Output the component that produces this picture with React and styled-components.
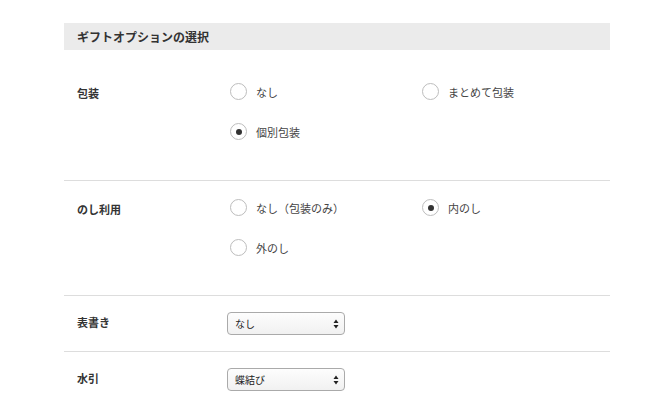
import styled, { createGlobalStyle } from "styled-components";

const GlobalStyle = createGlobalStyle`
  html, body {
    margin: 0;
    padding: 0;
    background: #fff;
  }
  body {
    font-family: "Noto Sans CJK JP", "Noto Sans", sans-serif;
    color: #333;
  }
`;

const giftRows = [
  {
    label: "包装",
    type: "radio",
    options: ["なし", "まとめて包装", "個別包装"],
    checked: "個別包装",
  },
  {
    label: "のし利用",
    type: "radio",
    options: ["なし（包装のみ）", "内のし", "外のし"],
    checked: "内のし",
  },
  { label: "表書き", type: "select", value: "なし" },
  { label: "水引", type: "select", value: "蝶結び" },
];

const App = () => {
  return (
    <>
      <GlobalStyle />
      <Container>
        <Header>ギフトオプションの選択</Header>
        {giftRows.map((row, i) => (
          <Row
            key={row.label}
            $compact={row.type === "select"}
            $first={i === 0}
            $last={i === giftRows.length - 1}
          >
            <Label>{row.label}</Label>
            {row.type === "radio" ? (
              <Options>
                {row.options.map((opt) => (
                  <Option key={opt}>
                    <Radio $checked={opt === row.checked} />
                    <span>{opt}</span>
                  </Option>
                ))}
              </Options>
            ) : (
              <SelectBox>
                <span>{row.value}</span>
                <Arrows viewBox="0 0 6 10" width="6" height="10">
                  <path d="M3 0.5 L5.5 4 H0.5 Z" fill="#222" />
                  <path d="M3 9.5 L5.5 6 H0.5 Z" fill="#222" />
                </Arrows>
              </SelectBox>
            )}
          </Row>
        ))}
      </Container>
    </>
  );
};

export default App;

const Container = styled.div`
  width: 546px;
  margin: 23px 0 0 64px;
`;

const Header = styled.div`
  height: 27px;
  background: #ebebeb;
  padding-left: 13px;
  display: flex;
  align-items: center;
  font-size: 12px;
  font-weight: 700;
  color: #333;
`;

const Row = styled.div`
  display: flex;
  align-items: flex-start;
  padding: ${(p) => (p.$compact ? "16px 0 16px" : p.$first ? "33px 0 40px" : "18px 0 39px")};
  border-bottom: ${(p) => (p.$last ? "none" : "1px solid #ddd")};
`;

const Label = styled.div`
  flex-shrink: 0;
  width: 150px;
  padding-left: 13px;
  font-size: 11px;
  font-weight: 700;
  color: #333;
  line-height: 23px;
  margin-top: -1px;
`;

const Options = styled.div`
  display: grid;
  grid-template-columns: 192px 160px;
  row-gap: 23px;
  margin-left: 3px;
`;

const Option = styled.label`
  display: flex;
  align-items: center;
  gap: 9px;
  height: 17px;
  font-size: 11px;
  color: #444;
`;

const Radio = styled.span`
  box-sizing: border-box;
  width: 17px;
  height: 17px;
  border-radius: 50%;
  border: 1px solid #bdbdbd;
  background: #fff;
  display: flex;
  align-items: center;
  justify-content: center;
  flex-shrink: 0;
  &::after {
    content: "";
    display: ${(p) => (p.$checked ? "block" : "none")};
    width: 6px;
    height: 6px;
    border-radius: 50%;
    background: #333;
  }
`;

const SelectBox = styled.div`
  box-sizing: border-box;
  width: 118px;
  height: 23px;
  border: 1px solid #aaa;
  border-radius: 4px;
  background: linear-gradient(#fdfdfd, #f1f1f1);
  display: flex;
  align-items: center;
  justify-content: space-between;
  padding: 0 5px 0 7px;
  font-size: 10px;
  color: #222;
`;

const Arrows = styled.svg`
  display: block;
`;
